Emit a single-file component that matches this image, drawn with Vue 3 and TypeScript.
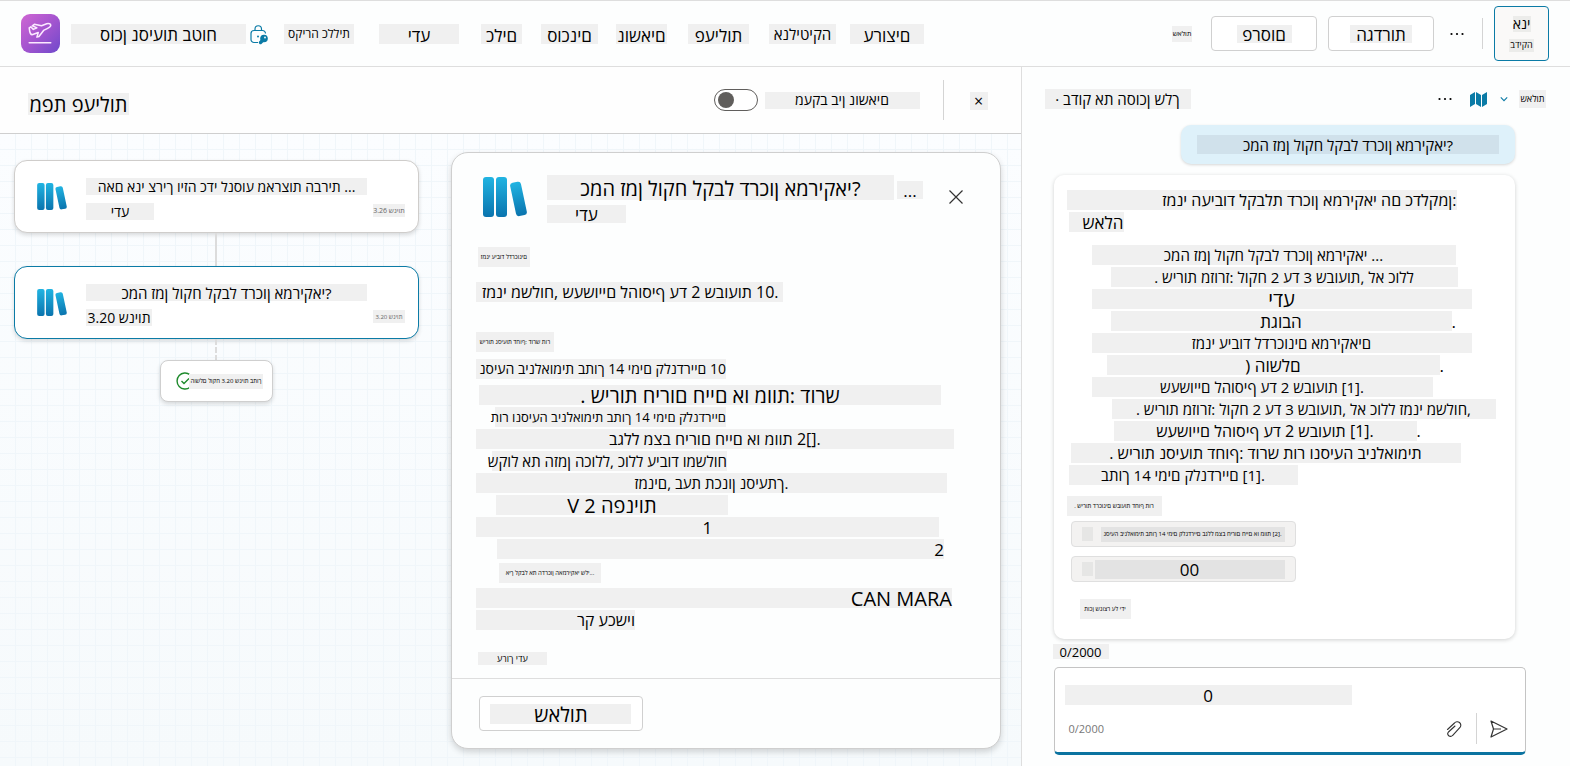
<script setup lang="ts">
import { ref } from 'vue'

type Size = 'tiny' | 'xs' | 's' | 'sm' | 'md' | 'ml' | 'lg' | 'xl'
type Align = 'center' | 'end' | 'inset'

interface Line {
  text: string
  indent: number
  width: number
  size: Size
  align: Align
  space?: number
  tail?: string
}

const tracking = ref(false)
const message = ref('0')

const tabs: { text: string; width: number; gap: number; size: Size }[] = [
  { text: 'סקירה כללית', width: 70, gap: 16, size: 'xs' },
  { text: 'ידע', width: 80, gap: 25, size: 'lg' },
  { text: 'כלים', width: 41, gap: 22, size: 'lg' },
  { text: 'סוכנים', width: 57, gap: 19, size: 'lg' },
  { text: 'נושאים', width: 51, gap: 18, size: 'lg' },
  { text: 'פעילות', width: 61, gap: 21, size: 'lg' },
  { text: 'אנליטיקה', width: 67, gap: 20, size: 'md' },
  { text: 'ערוצים', width: 74, gap: 14, size: 'lg' },
]

const detailLines: Line[] = [
  { text: 'זמני עיבוד לדרכונים', indent: 2, width: 52, size: 'tiny', align: 'center' },
  { text: 'זמני משלוח, שעשויים להוסיף עד 2 שבועות 10.', indent: 0, width: 307, size: 'ml', align: 'inset', space: 13 },
  { text: 'שירות נסיעות דחוף: דורש תור', indent: 0, width: 78, size: 'tiny', align: 'center', space: 28 },
  { text: 'נסיעה בינלאומית בתוך 14 ימים קלנדריים 10', indent: 0, width: 250, size: 'sm', align: 'end', space: 5 },
  { text: '. שירות חירום חיים או מוות: דורש', indent: 3, width: 462, size: 'xl', align: 'center', space: 4 },
  { text: 'תור ונסיעה בינלאומית בתוך 14 ימים קלנדריים', indent: 19, width: 231, size: 's', align: 'end' },
  { text: 'בגלל מצב חירום חיים או מוות 2[].', indent: 0, width: 478, size: 'ml', align: 'center' },
  { text: 'שקול את הזמן הכולל, כולל עיבוד ומשלוח', indent: 16, width: 235, size: 'md', align: 'end' },
  { text: 'זמנים, בעת תכנון נסיעתך.', indent: 0, width: 471, size: 'md', align: 'center' },
  { text: 'V 2 הפניות', indent: 20, width: 232, size: 'xl', align: 'center' },
  { text: '1', indent: 0, width: 463, size: 'lg', align: 'center' },
  { text: '2', indent: 21, width: 447, size: 'lg', align: 'end' },
  { text: 'איך לקבל את הדרכון האמריקאי שלי...', indent: 23, width: 102, size: 'tiny', align: 'center', space: 2 },
  { text: 'CAN MARA', indent: 0, width: 476, size: 'xl', align: 'end', space: 3 },
  { text: 'רק עכשיו', indent: 0, width: 159, size: 'ml', align: 'end' },
]

const answerLines: Line[] = [
  { text: 'זמני העיבוד לקבלת דרכון אמריקאי הם כדלקמן:', indent: 0, width: 390, size: 'ml', align: 'end' },
  { text: 'שאלה', indent: 2, width: 55, size: 'lg', align: 'end' },
  { text: 'כמה זמן לוקח לקבל דרכון אמריקאי ...', indent: 25, width: 364, size: 'md', align: 'center', space: 11 },
  { text: '. שירות מזורז: לוקח 2 עד 3 שבועות, לא כולל', indent: 44, width: 347, size: 'md', align: 'center' },
  { text: 'ידע', indent: 25, width: 380, size: 'xl', align: 'center' },
  { text: 'תגובה', indent: 44, width: 341, size: 'lg', align: 'center', tail: '.' },
  { text: 'זמני עיבוד לדרכונים אמריקאים', indent: 25, width: 380, size: 'md', align: 'center' },
  { text: ') הושלם', indent: 40, width: 333, size: 'lg', align: 'center', tail: '.' },
  { text: 'שעשויים להוסיף עד 2 שבועות [1].', indent: 25, width: 341, size: 'md', align: 'center' },
  { text: '. שירות מזורז: לוקח 2 עד 3 שבועות, לא כולל זמני משלוח,', indent: 45, width: 384, size: 'md', align: 'center' },
  { text: 'שעשויים להוסיף עד 2 שבועות [1].', indent: 47, width: 303, size: 'ml', align: 'center', tail: '.' },
  { text: '. שירות נסיעות דחוף: דורש תור ונסיעה בינלאומית', indent: 4, width: 390, size: 'ml', align: 'center' },
  { text: 'בתוך 14 ימים קלנדריים [1].', indent: 2, width: 229, size: 'md', align: 'center' },
  { text: '. שירות דרכונים שבועות דחוף תור', indent: 0, width: 95, size: 'tiny', align: 'center', space: 9 },
]

const lineStyle = (line: Line) => ({
  marginLeft: `${line.indent}px`,
  marginTop: `${line.space ?? 0}px`,
  width: `${line.width}px`,
})
</script>

<template>
  <div class="app">
    <svg class="defs" aria-hidden="true">
      <defs>
        <linearGradient id="book" x1="0" y1="0" x2="0" y2="1">
          <stop offset="0" stop-color="#21b4e2" />
          <stop offset="1" stop-color="#0a74ae" />
        </linearGradient>
        <symbol id="books" viewBox="0 0 44 40">
          <rect x="0" y="0" width="11" height="40" rx="3" fill="url(#book)" />
          <rect x="13" y="0" width="11" height="40" rx="3" fill="url(#book)" />
          <rect x="30" y="5" width="11" height="34" rx="3" fill="url(#book)" transform="rotate(-12 35 22)" />
        </symbol>
        <symbol id="dots" viewBox="0 0 16 16">
          <circle cx="2.5" cy="8" r="1.1" /><circle cx="8" cy="8" r="1.1" /><circle cx="13.5" cy="8" r="1.1" />
        </symbol>
      </defs>
    </svg>

    <header class="topbar">
      <div class="logo">
        <svg viewBox="0 0 38 38" fill="none" stroke="#fbe9ff" stroke-width="1.5" stroke-linejoin="round" stroke-linecap="round">
          <path d="M8 13.5 9.500 12.500 12 15 15.500 13.500 11 11.500 13 10 20 11.500 25 9.500C27 9 29 9.500 29 11C29 12.500 27 13.500 25.500 14.200L22 16 17.500 22 15.500 22.500 16.800 18 11.500 20C9.500 20.500 8.500 19 8 13.500Z" />
          <path d="M8 28H29" />
        </svg>
      </div>
      <h1 class="chip lg brand">סוכן נסיעות בטוח</h1>
      <svg class="lock" viewBox="0 0 18 20" fill="none" stroke="#0b7ba6" stroke-width="1.200">
        <path d="M5 5.500V4a3.200 3.200 0 0 1 6.500 0V5.500M8 17.500H4A3 3 0 0 1 1 14.500V8.500A3 3 0 0 1 4 5.500h8.500A3 3 0 0 1 15.500 8.500" />
        <circle cx="8" cy="11.500" r="1" fill="#0b7ba6" stroke="none" />
        <path d="M10.500 17.500 14 14" stroke-width="3.400" stroke-linecap="round" />
        <circle cx="14" cy="13.500" r="3.200" fill="#0b7ba6" />
        <circle cx="15" cy="12.500" r="0.900" fill="#fff" stroke="none" />
      </svg>
      <nav class="tabs">
        <a v-for="tab in tabs" :key="tab.text" href="#" class="chip" :class="tab.size" :style="{ width: tab.width + 'px', marginLeft: tab.gap + 'px' }">{{ tab.text }}</a>
      </nav>
      <div class="actions">
        <span class="chip nano ask">שאלות</span>
        <button type="button" class="btn action"><span class="chip lg publish">פרסום</span></button>
        <button type="button" class="btn action"><span class="chip lg settings">הגדרות</span></button>
        <button type="button" class="icon-btn more" aria-label="עוד"><svg width="16" height="16"><use href="#dots" /></svg></button>
        <span class="rule"></span>
        <button type="button" class="test"><span class="chip sm">אני</span><span class="chip mini">בדיקה</span></button>
      </div>
    </header>

    <main class="body">
      <section class="map">
        <div class="subbar">
          <h2 class="chip xl map-title">מפת פעילות</h2>
          <input id="track" v-model="tracking" class="switch" type="checkbox" role="switch" />
          <label for="track" class="chip sm track">מעקב בין נושאים</label>
          <span class="rule tall"></span>
          <button type="button" class="chip ml close-map" aria-label="סגור">×</button>
        </div>

        <div class="canvas">
          <div class="flow">
            <article class="node">
              <svg class="node-icon"><use href="#books" /></svg>
              <div class="node-text">
                <span class="chip sm first">האם אני צריך ויזה כדי לנסוע מארצות הברית ...</span>
                <span class="chip sm topic">ידע</span>
              </div>
              <span class="chip nano time faint">3.26 שניות</span>
            </article>
            <span class="link"></span>
            <article class="node selected">
              <svg class="node-icon"><use href="#books" /></svg>
              <div class="node-text">
                <span class="chip md first">כמה זמן לוקח לקבל דרכון אמריקאי?</span>
                <span class="chip sm spent">3.20 שניות</span>
              </div>
              <span class="chip tiny time faint">3.20 שניות</span>
            </article>
            <span class="link dashed"></span>
            <div class="done">
              <svg viewBox="0 0 18 18" fill="none" stroke="#1e8a2c" stroke-width="1.400"><path d="M14 2.700A8 8 0 1 0 14 15.300M5.500 9l2.500 2.500L13 6.500" /></svg>
              <span class="chip tiny">הושלם לוקח 3.20 שניות בתוך</span>
            </div>
          </div>

          <article class="detail">
            <div class="detail-body">
              <div class="detail-head">
                <svg class="detail-icon"><use href="#books" /></svg>
                <div class="detail-names">
                  <h3 class="chip xl">כמה זמן לוקח לקבל דרכון אמריקאי?</h3>
                  <span class="chip lg">ידע</span>
                </div>
                <span class="chip lg ellipsis">...</span>
                <button type="button" class="icon-btn close" aria-label="סגור"><svg viewBox="0 0 14 14" width="14" height="14" fill="none" stroke="#333" stroke-width="1.200"><path d="M0.500 0.500 13.500 13.500M13.500 0.500 0.500 13.500" /></svg></button>
              </div>
              <div class="lines">
                <p v-for="(line, i) in detailLines" :key="i" class="chip" :class="[line.size, line.align]" :style="lineStyle(line)">{{ line.text }}</p>
              </div>
              <a href="#" class="chip mini edit">ערוך ידע</a>
            </div>
            <footer class="detail-foot">
              <button type="button" class="btn ask-btn"><span class="chip xl">שאלות</span></button>
            </footer>
          </article>
        </div>
      </section>

      <aside class="chat">
        <div class="chat-head">
          <h2 class="chip md">· בדוק את הסוכן שלך</h2>
          <button type="button" class="icon-btn" aria-label="עוד"><svg width="16" height="16"><use href="#dots" /></svg></button>
          <button type="button" class="icon-btn map-btn" aria-label="מפה"><svg viewBox="0 0 17 15" width="17" height="15" fill="#0b7ba6"><path d="M0 3 5 0V12L0 15ZM6 0 11 3V15L6 12ZM12 3 17 0V12L12 15Z" /></svg></button>
          <button type="button" class="icon-btn" aria-label="פתח"><svg viewBox="0 0 10 6" width="8" height="6" fill="none" stroke="#0b7ba6" stroke-width="1.400"><path d="M1 1 5 5 9 1" /></svg></button>
          <span class="chip mini ask-chat">שאלות</span>
        </div>

        <div class="bubble"><span class="chip md">כמה זמן לוקח לקבל דרכון אמריקאי?</span></div>

        <div class="answer">
          <div class="lines">
            <p v-for="(line, i) in answerLines" :key="i" class="chip" :class="[line.size, line.align]" :style="lineStyle(line)">{{ line.text }}<span v-if="line.tail" class="tail">{{ line.tail }}</span></p>
          </div>
          <a href="#" class="source">
            <span class="mark"></span>
            <span class="chip tiny cite">נסיעה בינלאומית בתוך 14 ימים קלנדריים בגלל מצב חירום חיים או מוות [2].</span>
          </a>
          <a href="#" class="source">
            <span class="mark"></span>
            <span class="chip lg count">00</span>
          </a>
          <span class="chip tiny note">תוכן שנוצר על ידי</span>
        </div>

        <label class="chip s counter" for="message">0/2000</label>
        <form class="composer" @submit.prevent>
          <input id="message" v-model="message" class="chip lg message" type="text" />
          <div class="tools">
            <span class="limit">0/2000</span>
            <button type="button" class="icon-btn" aria-label="צרף"><svg viewBox="0 0 16 18" width="16" height="18" fill="none" stroke="#333" stroke-width="1.100" stroke-linecap="round"><path d="M1.500 9.500 8.500 3A3.500 3.500 0 0 1 14 7.500L6.500 15.500A2.500 2.500 0 0 1 2.500 12L9 6" /></svg></button>
            <span class="rule"></span>
            <button type="submit" class="icon-btn send" aria-label="שלח"><svg viewBox="0 0 18 18" width="18" height="18" fill="none" stroke="#333" stroke-width="1.200" stroke-linejoin="round"><path d="M1 1 17 9 1 17 3.500 9ZM3.500 9H11" /></svg></button>
          </div>
        </form>
      </aside>
    </main>
  </div>
</template>

<style>
body {
  margin: 0;
}
</style>

<style scoped>
.app {
  display: flex;
  flex-direction: column;
  min-height: 100vh;
  background: #fdfefe;
  color: #000;
  font-family: 'Open Sans', 'Noto Sans', 'DejaVu Sans', sans-serif;
  font-size: 14px;
}
.app * {
  box-sizing: border-box;
}
.defs {
  position: absolute;
  width: 0;
  height: 0;
}
button,
input {
  font-family: inherit;
  color: inherit;
  border: 0;
  padding: 0;
  margin: 0;
}

/* Shaded text run; glyphs keep left-to-right order */
.chip {
  display: flex;
  align-items: center;
  justify-content: center;
  flex: none;
  height: 20px;
  margin: 0;
  line-height: 20px;
  background: #f0f0f0;
  color: #000;
  font-weight: 400;
  white-space: nowrap;
  text-decoration: none;
  direction: ltr;
  unicode-bidi: bidi-override;
}
.end { justify-content: flex-end; }
.inset { justify-content: flex-start; padding-left: 6px; }
.tiny { font-size: 6px; }
.nano { font-size: 7px; }
.mini { font-size: 9px; }
.xs { font-size: 12px; }
.s { font-size: 13px; }
.sm { font-size: 14px; }
.md { font-size: 15px; }
.ml { font-size: 16px; }
.lg { font-size: 17px; padding-top: 2px; }
.xl { font-size: 20px; padding-top: 2px; }
.faint { color: #666; }

.rule {
  flex: none;
  width: 1px;
  height: 31px;
  background: #d4d4d4;
}
.btn {
  display: flex;
  align-items: center;
  justify-content: center;
  height: 35px;
  background: #fff;
  border: 1px solid #d0d0d0;
  border-radius: 4px;
}
.icon-btn {
  display: flex;
  align-items: center;
  justify-content: center;
  flex: none;
  width: 24px;
  height: 24px;
  background: none;
}

.topbar {
  display: flex;
  align-items: center;
  height: 67px;
  padding: 0 21px;
  border-top: 1px solid #dedede;
  border-bottom: 1px solid #dedede;
}
.logo {
  flex: none;
  width: 39px;
  height: 39px;
  border-radius: 9px;
  background: linear-gradient(135deg, #cf66d3 0%, #a455cf 50%, #6f49cb 100%);
}
.logo svg { display: block; }
.brand { width: 175px; margin-left: 11px; }
.lock { flex: none; width: 18px; height: 20px; margin: 2px 0 0 4px; }
.tabs { display: flex; }
.tabs .lg { padding-top: 4px; }
.actions { display: flex; align-items: center; margin-left: auto; }
.ask { width: 20px; height: 16px; margin-right: 19px; }
.action { width: 106px; margin-right: 11px; }
.publish { width: 55px; height: 18px; }
.settings { width: 62px; height: 18px; }
.more { margin: 0 13px 0 0; }
.test {
  display: flex;
  flex-direction: column;
  align-items: center;
  justify-content: center;
  gap: 7px;
  width: 55px;
  height: 55px;
  margin-left: 11px;
  background: #faf9f8;
  border: 1px solid #0b7ba6;
  border-radius: 4px;
}
.test .chip { width: 18px; height: 16px; background: #ececea; }
.test .mini { width: 25px; height: 13px; }

.body { display: flex; flex: 1; }
.map { display: flex; flex-direction: column; flex: none; width: 65%; }
.subbar {
  display: flex;
  align-items: center;
  height: 67px;
  padding: 0 33px 0 28px;
  background: #fefefe;
  border-bottom: 1px solid #cfcfcf;
}
.map-title { width: 101px; height: 22px; margin: 8px auto 0 0; }
.switch {
  display: flex;
  align-items: center;
  appearance: none;
  width: 44px;
  height: 22px;
  padding: 0 3px;
  border: 1px solid #605e5c;
  border-radius: 11px;
  background: #fff;
}
.switch::before {
  content: '';
  width: 16px;
  height: 16px;
  border-radius: 50%;
  background: #605e5c;
}
.switch:checked { justify-content: flex-end; }
.track { width: 155px; height: 17px; margin-left: 7px; }
.tall { height: 40px; margin: 0 26px 0 23px; }
.close-map { width: 18px; height: 18px; margin-top: 2px; }

.canvas {
  display: flex;
  flex: 1;
  gap: 32px;
  padding: 18px 20px 17px 14px;
  background:
    repeating-linear-gradient(90deg, transparent 0 15px, #f0f6fa 15px 16px),
    repeating-linear-gradient(180deg, transparent 0 15px, #f0f6fa 15px 16px),
    linear-gradient(180deg, #fbfdff, #f6fafc);
}
.flow {
  display: flex;
  flex-direction: column;
  align-items: center;
  flex: 406;
  min-width: 0;
  padding-top: 8px;
}
.node {
  display: flex;
  width: 100%;
  height: 73px;
  padding: 17px 13px 0 22px;
  background: #fff;
  border: 1px solid #cfcdcb;
  border-radius: 13px;
  box-shadow: 0 2px 4px rgba(0, 0, 0, 0.14);
}
.selected { border-color: #0b7ba6; }
.node-icon { flex: none; width: 30px; height: 27px; margin-top: 5px; }
.node-text { display: flex; flex-direction: column; gap: 8px; margin-left: 19px; }
.node-text .chip { height: 17px; }
.first { width: 281px; }
.topic { width: 68px; }
.spent { width: 66px; }
.time { width: 32px; height: 13px; margin: 26px 0 0 auto; }
.link { width: 2px; height: 33px; background: #dcdcdc; }
.dashed {
  height: 21px;
  background: repeating-linear-gradient(180deg, #dcdcdc 0 6px, transparent 6px 8px);
}
.done {
  display: flex;
  align-items: center;
  width: 113px;
  height: 42px;
  padding-left: 15px;
  background: #fff;
  border: 1px solid #cfcfcf;
  border-radius: 8px;
  box-shadow: 0 2px 4px rgba(0, 0, 0, 0.14);
}
.done svg { flex: none; width: 18px; height: 18px; margin-right: -5px; }
.done .chip { width: 74px; height: 15px; }

.detail {
  display: flex;
  flex-direction: column;
  flex: 549;
  min-width: 0;
  background: #fdfefe;
  border: 1px solid #cfcfcf;
  border-radius: 17px;
  box-shadow: 0 3px 6px rgba(0, 0, 0, 0.16);
}
.detail-body { flex: 1; padding: 22px 24px 0; }
.detail-head { display: flex; padding-left: 7px; }
.detail-icon { flex: none; width: 44px; height: 40px; margin-top: 2px; }
.detail-names { display: flex; flex-direction: column; gap: 5px; margin-left: 20px; }
.detail-names h3 { width: 347px; height: 25px; }
.detail-names span { width: 79px; height: 18px; }
.ellipsis { width: 26px; height: 18px; margin: 6px 0 0 3px; }
.close { margin: 10px 8px 0 auto; }
.detail .lines { margin-top: 24px; }
.lines { display: flex; flex-direction: column; gap: 2px; }
.edit { width: 69px; height: 13px; margin: 22px 0 0 2px; }
.detail-foot { padding: 17px 27px; border-top: 1px solid #dedede; }
.ask-btn { width: 164px; }
.ask-btn .chip { width: 141px; }

.chat {
  flex: 1;
  min-width: 0;
  padding: 0 44px 11px 32px;
  border-left: 1px solid #dedede;
}
.chat-head { display: flex; align-items: center; height: 58px; padding-top: 6px; margin: 0 -20px 0 -9px; }
.chat-head h2 { width: 146px; margin-right: auto; }
.map-btn { margin: 0 2px 0 9px; }
.ask-chat { width: 27px; height: 18px; margin-left: 3px; }
.bubble {
  width: 334px;
  margin: 0 11px 0 auto;
  padding: 10px 16px;
  background: #def1fa;
  border-radius: 10px;
  box-shadow: 0 1px 3px rgba(0, 0, 0, 0.16);
}
.bubble .chip { background: #d0e1eb; height: 19px; }
.answer {
  margin: 11px 11px 5px 0;
  padding: 15px 13px 20px;
  background: #fff;
  border-radius: 10px;
  box-shadow: 0 1px 4px rgba(0, 0, 0, 0.18);
}
.answer .lines .chip { position: relative; }
.tail { position: absolute; left: 100%; }
.source {
  display: flex;
  align-items: center;
  width: 225px;
  height: 26px;
  margin: 5px 0 9px 4px;
  padding: 0 10px;
  background: #f3f2f1;
  border: 1px solid #dfdfdf;
  border-radius: 4px;
  text-decoration: none;
}
.source .chip { flex: 1; background: #e3e3e3; }
.mark { flex: none; width: 11px; height: 14px; background: #e6e6e5; }
.source .cite { height: 15px; margin-left: 8px; }
.source .count { height: 19px; margin-left: 2px; }
.note { width: 51px; margin: 17px 0 0 13px; }
.counter { width: 56px; height: 15px; margin: 0 0 8px -1px; }
.composer {
  padding: 17px 14px 8px 10px;
  background: #fff;
  border: 1px solid #c4c4c4;
  border-bottom: 3px solid #0b73a0;
  border-radius: 5px;
}
.message { width: 287px; text-align: center; }
.tools { display: flex; align-items: center; margin-top: 8px; }
.limit { margin: 0 auto 0 4px; font-size: 11px; color: #777; }
.tools .rule { margin: 0 10px; }
</style>
